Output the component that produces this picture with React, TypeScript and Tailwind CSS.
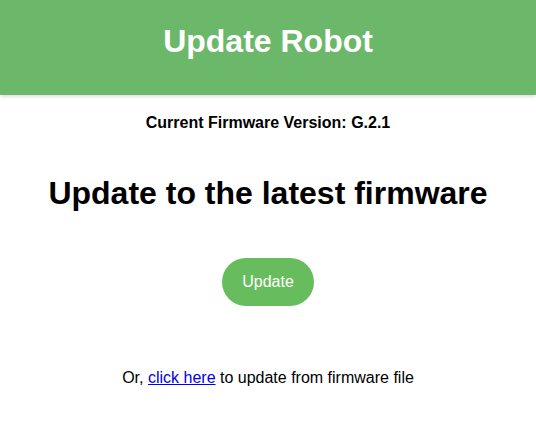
import React from 'react';

export default function App() {
    return (
        <div className="min-h-screen bg-white text-center text-black font-['Liberation_Sans',Arial,sans-serif]">
            {/* header */}
            <header className="h-[95px] bg-[#6cb86a] pt-[23px] shadow-[0_2px_3px_rgba(0,0,0,0.12)]">
                <h1 className="text-[32px] font-bold leading-[37px] text-white">Update Robot</h1>
            </header>

            <p className="mt-[19px] text-[16px] font-bold leading-[18px]">Current Firmware Version: G.2.1</p>

            <h1 className="mt-[43px] text-[32px] font-bold leading-[37px]">Update to the latest firmware</h1>

            <button className="mt-[46px] h-[48px] w-[92px] rounded-full bg-[#67bd5d] text-[16px] text-white">
                Update
            </button>

            <p className="mt-[63px] text-[16px] leading-[18px]">
                Or, <a href="#" className="text-[#0000ee] underline">click here</a> to update from firmware file
            </p>
        </div>
    );
}
